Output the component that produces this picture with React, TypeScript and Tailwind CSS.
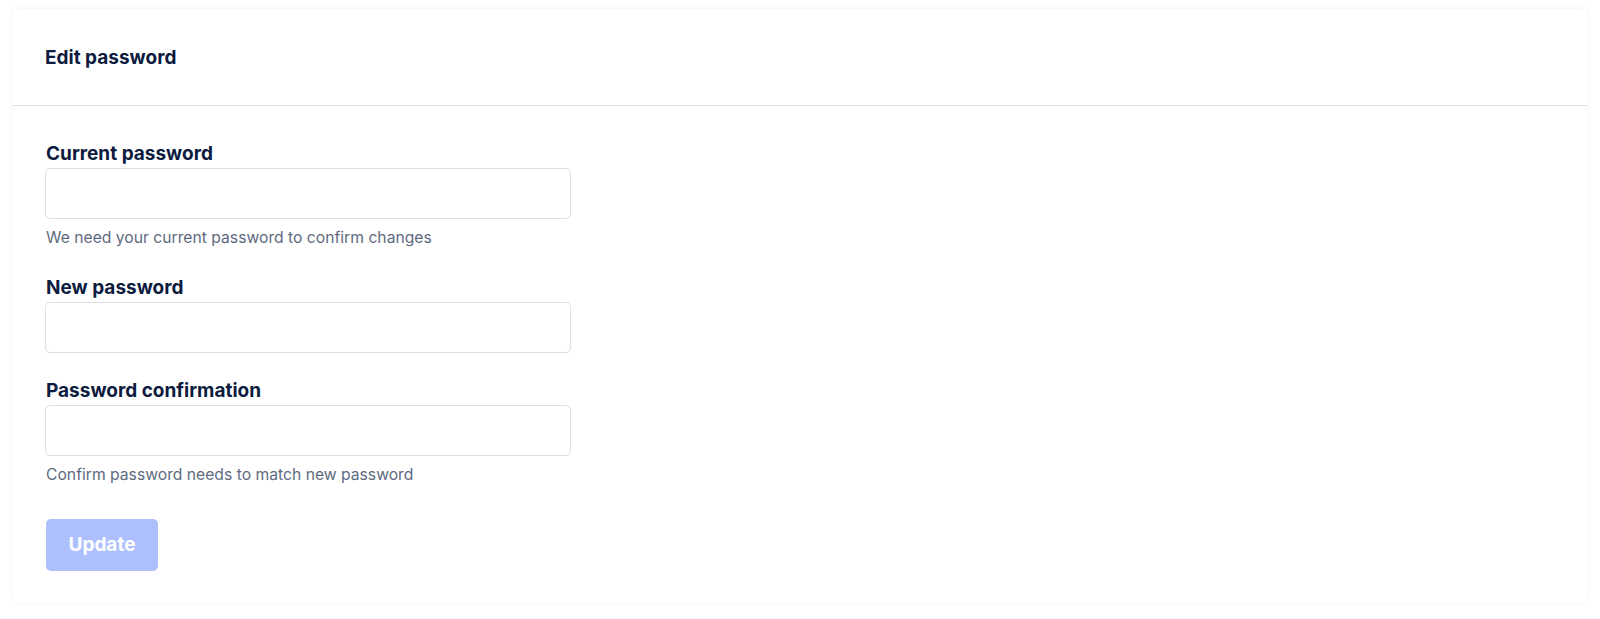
import { useState } from "react";

interface FieldProps {
  id: string;
  label: string;
  hint?: string;
  value: string;
  onChange: (v: string) => void;
  className?: string;
}

function PasswordField({ id, label, hint, value, onChange, className }: FieldProps) {
  return (
    <div className={className}>
      <label
        htmlFor={id}
        className="block text-[19px] leading-[24px] font-bold text-[#0d1b3e] pl-px"
      >
        {label}
      </label>
      <input
        id={id}
        type="password"
        value={value}
        onChange={(e) => onChange(e.target.value)}
        className="mt-[2px] block w-[526px] h-[51px] rounded-[5px] border border-[#dcdfe5] bg-white px-3 text-[16px] outline-none focus:border-[#a9b8fb]"
      />
      {hint && (
        <p className="mt-[9px] pl-px text-[15.7px] leading-[20px] text-[#5e6a80]">
          {hint}
        </p>
      )}
    </div>
  );
}

export default function App() {
  const [current, setCurrent] = useState("");
  const [next, setNext] = useState("");
  const [confirm, setConfirm] = useState("");

  const canSubmit = current !== "" && next !== "" && next === confirm;

  return (
    <div
      className="min-h-screen bg-white pt-[9px] px-[13px]"
      style={{ fontFamily: "Inter, Lato, sans-serif" }}
    >
      <div className="w-full h-[594px] rounded-[4px] bg-white shadow-[0_0_6px_rgba(15,23,42,0.06)]">
        <div className="h-[97px] flex items-center px-[32px] pt-[3px] border-b border-[#dcdfe4]">
          <h2 className="text-[19px] font-bold text-[#0d1b3e]">Edit password</h2>
        </div>

        <form
          onSubmit={(e) => e.preventDefault()}
          className="px-[32px] pt-[36px] pb-[32px]"
        >
          <PasswordField
            id="current-password"
            label="Current password"
            hint="We need your current password to confirm changes"
            value={current}
            onChange={setCurrent}
          />
          <PasswordField
            id="new-password"
            label="New password"
            value={next}
            onChange={setNext}
            className="mt-[28px]"
          />
          <PasswordField
            id="password-confirmation"
            label="Password confirmation"
            hint="Confirm password needs to match new password"
            value={confirm}
            onChange={setConfirm}
            className="mt-[26px]"
          />

          <button
            type="submit"
            disabled={!canSubmit}
            className="mt-[34px] ml-px h-[52px] w-[112px] rounded-[5px] bg-[#aebffd] text-[19px] font-bold text-white disabled:cursor-not-allowed"
          >
            Update
          </button>
        </form>
      </div>
    </div>
  );
}
